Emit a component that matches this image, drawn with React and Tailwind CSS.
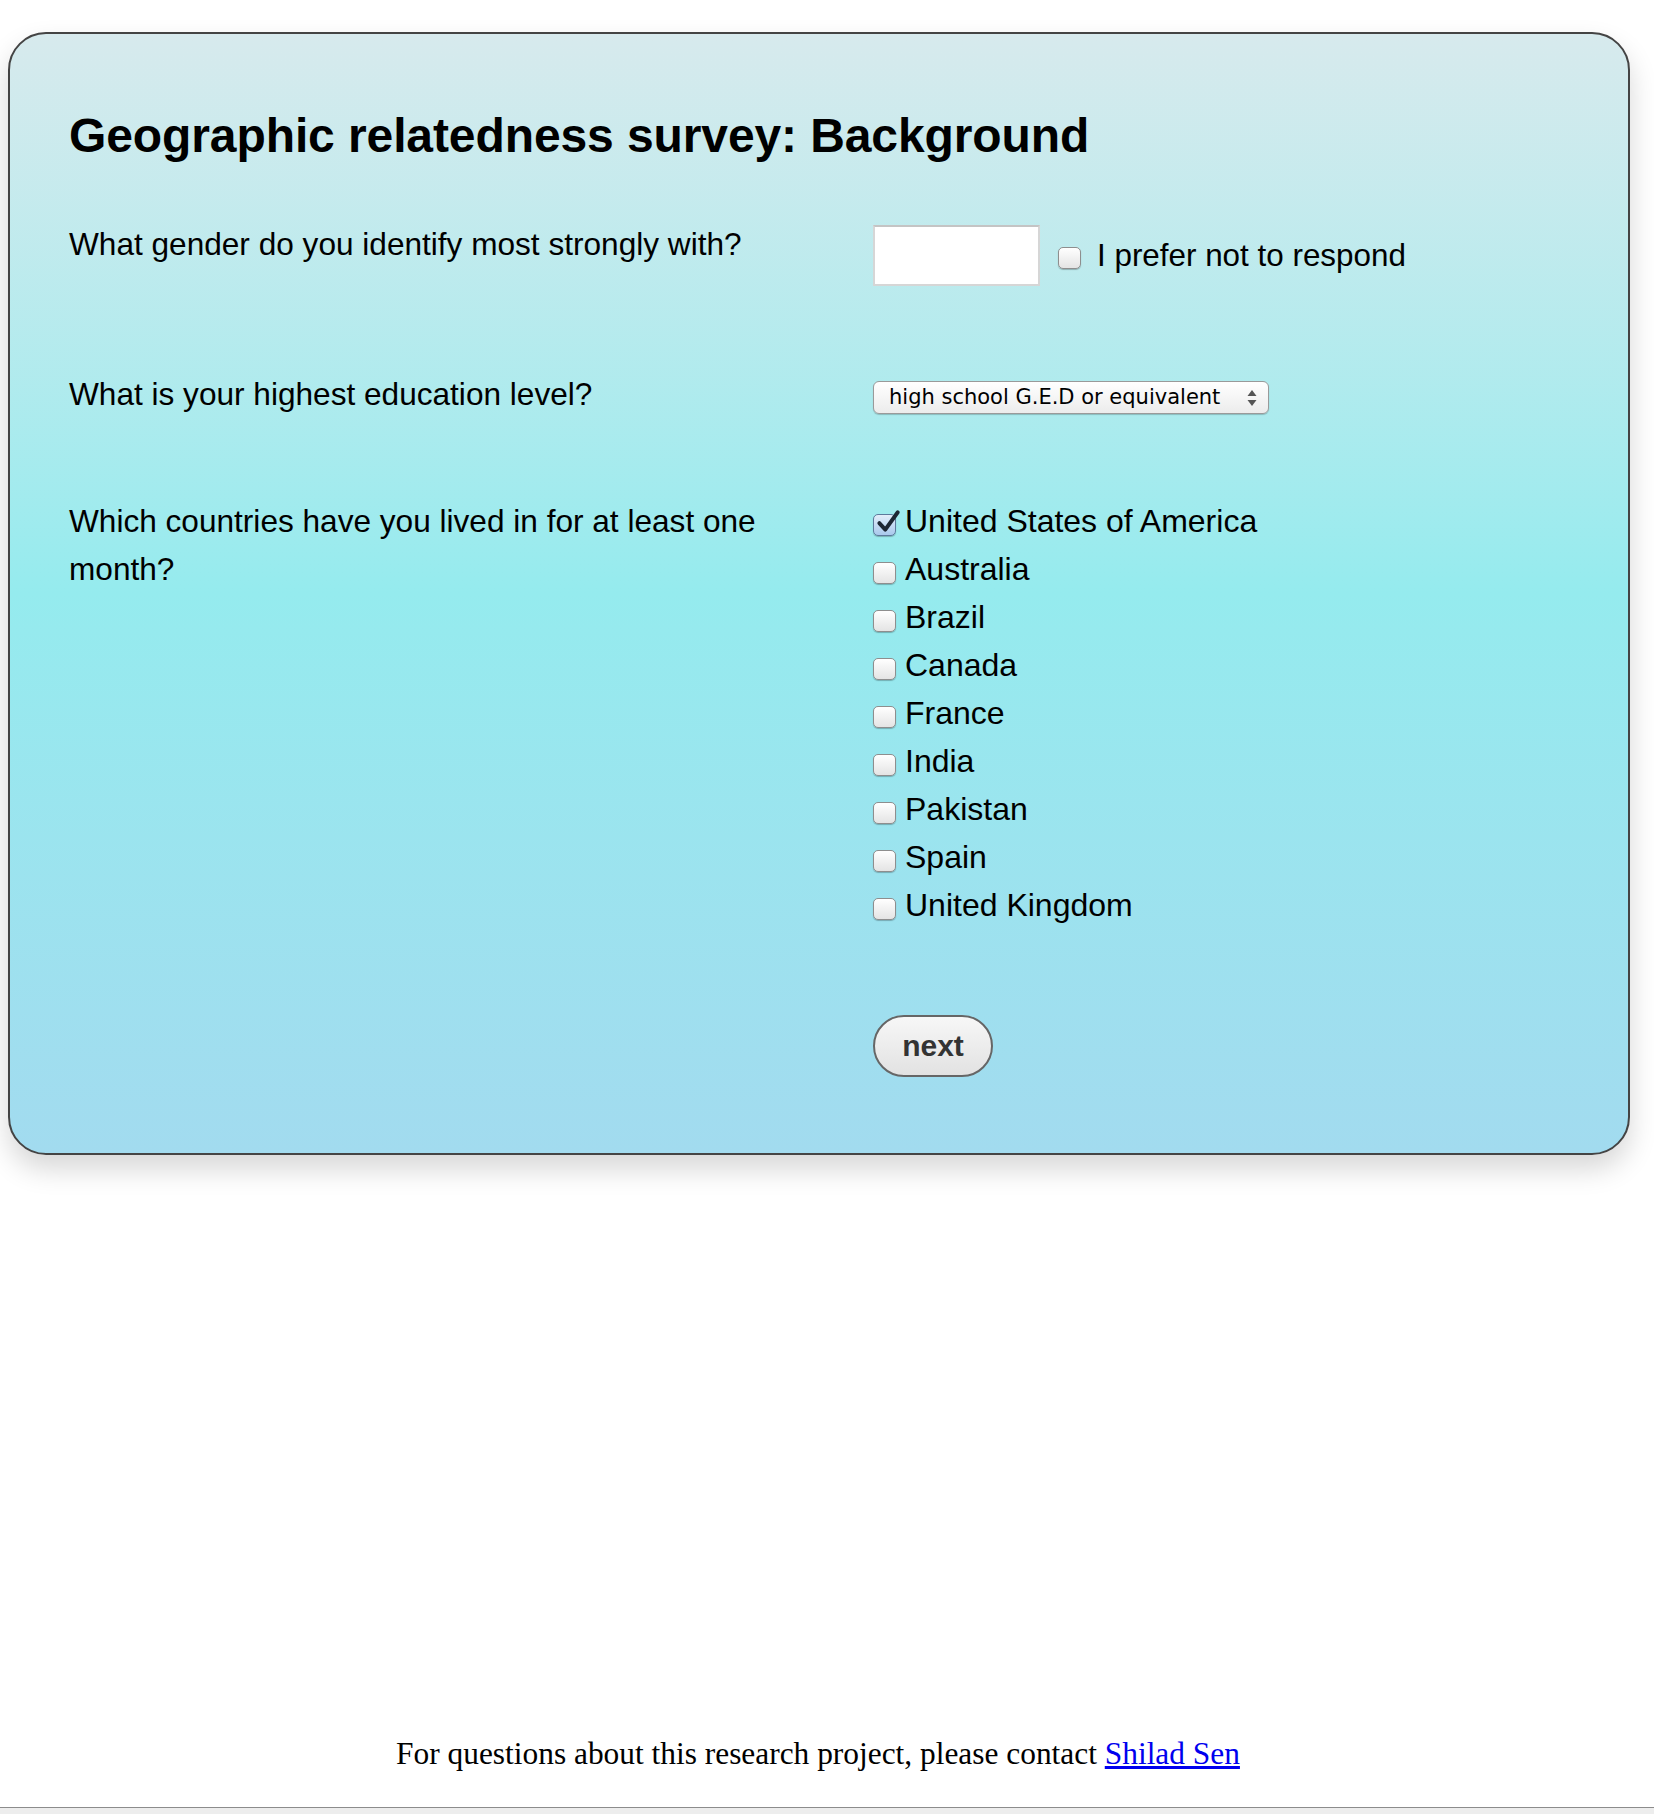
import React, { useState } from "react";

const countries = [
  "United States of America",
  "Australia",
  "Brazil",
  "Canada",
  "France",
  "India",
  "Pakistan",
  "Spain",
  "United Kingdom",
];

// mac style checkbox drawn with spans, native ones look nothing like the shot
const Box = ({ checked, onClick }) => (
  <span
    onClick={onClick}
    className={
      "relative inline-block w-[23px] h-[22px] rounded-[5px] border shadow-[0_1px_1px_rgba(0,0,0,0.25)] cursor-pointer " +
      (checked
        ? "border-[#5d7a9c] bg-linear-to-b from-[#e3eefa] to-[#a9c9ec]"
        : "border-[#8e8e8e] bg-linear-to-b from-white to-[#e4e4e4]")
    }
  >
    {checked && (
      <svg
        viewBox="0 0 24 24"
        className="absolute left-[1px] top-[-6px] w-[26px] h-[26px]"
      >
        <path
          d="M4 13 L9.5 19 L21 3"
          fill="none"
          stroke="#1d2733"
          strokeWidth="3.6"
          strokeLinecap="round"
          strokeLinejoin="round"
        />
      </svg>
    )}
  </span>
);

export default function App() {
  const [picked, setPicked] = useState({ "United States of America": true });
  const [noAnswer, setNoAnswer] = useState(false);

  const toggle = (c) => setPicked({ ...picked, [c]: !picked[c] });

  return (
    <div className="min-h-[1814px] bg-white flex flex-col font-['Liberation_Sans',Arial,sans-serif] text-black">
      <div className="mt-[32px] mx-[8px] w-[1622px] rounded-[38px] border-2 border-[#444] bg-linear-to-b from-[#d7eaed] via-[#95ebee] via-50% to-[#a2dbef] shadow-[0_14px_28px_rgba(0,0,0,0.16)] pt-[74px] pb-[76px] pl-[59px]">
        <h1 className="text-[48px] leading-[56px] font-bold tracking-[-0.1px]">
          Geographic relatedness survey: Background
        </h1>

        {/* gender */}
        <div className="grid grid-cols-[804px_1fr] mt-[56px]">
          <p className="text-[31.6px] leading-[48px] pr-[60px]">
            What gender do you identify most strongly with?
          </p>
          <div className="flex items-center pt-[5px]">
            <input
              type="text"
              className="w-[167px] h-[61px] bg-white border-2 border-[#d6d6d6] border-t-[#c4c4c4] outline-none px-2 text-[28px]"
            />
            <span className="ml-[18px] mt-[4px] flex">
              <Box checked={noAnswer} onClick={() => setNoAnswer(!noAnswer)} />
            </span>
            <span className="ml-[16px] text-[31.4px] leading-[48px]">
              I prefer not to respond
            </span>
          </div>
        </div>

        {/* education */}
        <div className="grid grid-cols-[804px_1fr] mt-[84px]">
          <p className="text-[31.6px] leading-[48px] pr-[60px]">
            What is your highest education level?
          </p>
          <div className="pt-[11px]">
            <div className="relative w-[396px] h-[33px] rounded-[6px] border border-[#9a9a9a] bg-linear-to-b from-white to-[#ececec] shadow-[0_1px_1px_rgba(0,0,0,0.2)] flex items-center pl-[15px] font-['DejaVu_Sans',sans-serif] text-[21px] leading-none">
              high school G.E.D or equivalent
              <svg
                viewBox="0 0 10 18"
                className="absolute right-[11px] top-[7px] w-[10px] h-[18px]"
              >
                <path d="M5 1 L9.5 7 L0.5 7 Z" fill="#555" />
                <path d="M5 17 L9.5 11 L0.5 11 Z" fill="#555" />
              </svg>
            </div>
          </div>
        </div>

        {/* countries */}
        <div className="grid grid-cols-[804px_1fr] mt-[79px]">
          <p className="text-[31.6px] leading-[48px] pr-[60px]">
            Which countries have you lived in for at least one month?
          </p>
          <div className="flex flex-col">
            {countries.map((c) => (
              <label key={c} className="flex items-start h-[48px]">
                <span className="mt-[17px] mr-[9px] flex">
                  <Box checked={!!picked[c]} onClick={() => toggle(c)} />
                </span>
                <span className="text-[32px] leading-[48px]">{c}</span>
              </label>
            ))}
          </div>
        </div>

        <div className="grid grid-cols-[804px_1fr] mt-[86px]">
          <div />
          <div>
            <button className="w-[120px] h-[62px] rounded-full border-2 border-[#666] bg-linear-to-b from-[#f7f7f7] to-[#e2e2e2] text-[30px] font-bold text-[#333] leading-none">
              next
            </button>
          </div>
        </div>
      </div>

      <p className="mt-[581px] text-center pr-[18px] font-['Liberation_Serif','Times_New_Roman',serif] text-[31.4px] leading-[36px]">
        For questions about this research project, please contact{" "}
        <a href="#" className="text-[#0000ee] underline">
          Shilad Sen
        </a>
      </p>

      <div className="mt-auto h-[7px] border-t border-[#8c8c8c] bg-[#ededed]" />
    </div>
  );
}
